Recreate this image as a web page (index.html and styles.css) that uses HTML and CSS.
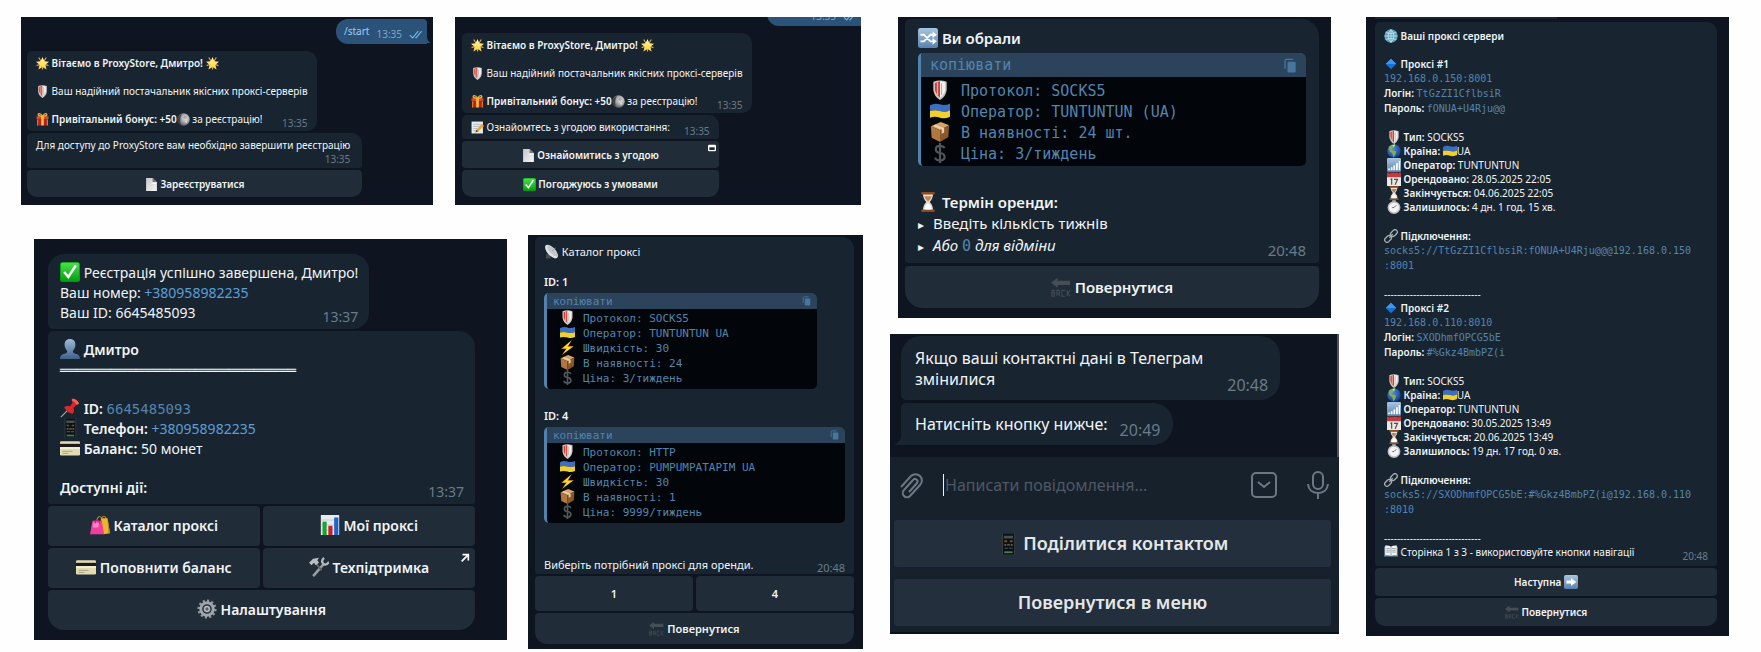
FILE: index.html
```html
<!DOCTYPE html>
<html lang="uk">
<head>
<meta charset="utf-8">
<meta name="viewport" content="width=device-width, initial-scale=1">
<title>ProxyStore</title>
<link rel="stylesheet" href="styles.css">
</head>
<body>
<svg class="sprite" aria-hidden="true">
  <defs>
    <linearGradient id="g-gold" x1="0" y1="0" x2="0" y2="1"><stop offset="0" stop-color="#fff9b8"/><stop offset="1" stop-color="#ffce30"/></linearGradient>
    <linearGradient id="g-green" x1="0" y1="0" x2="0" y2="1"><stop offset="0" stop-color="#4be04a"/><stop offset="1" stop-color="#00a010"/></linearGradient>
    <linearGradient id="g-blue" x1="0" y1="0" x2="0" y2="1"><stop offset="0" stop-color="#a9c6e2"/><stop offset="1" stop-color="#5881ac"/></linearGradient>
    <linearGradient id="g-page" x1="0" y1="0" x2="1" y2="1"><stop offset="0" stop-color="#c4c6c8"/><stop offset="1" stop-color="#f6f6f6"/></linearGradient>
    <linearGradient id="g-bust" x1="0" y1="0" x2="0" y2="1"><stop offset="0" stop-color="#9dbbd8"/><stop offset="1" stop-color="#3d618a"/></linearGradient>
    <radialGradient id="g-moon" cx=".65" cy=".4" r=".7"><stop offset="0" stop-color="#e8e8e8"/><stop offset=".5" stop-color="#a4a4a6"/><stop offset="1" stop-color="#4a4b50"/></radialGradient>
    <radialGradient id="g-earth" cx=".4" cy=".35" r=".7"><stop offset="0" stop-color="#4f8fe8"/><stop offset="1" stop-color="#123a8c"/></radialGradient>
  </defs>
  <symbol id="star" viewBox="0 0 24 24"><path stroke="#e0a63a" stroke-width="2.200" d="M12 12L5 1M12 12l7-11M12 12L1 16M12 12l11 4M12 12v11"/><path fill="url(#g-gold)" d="M12 0l3.500 8 8.500.8-6.500 5.500L19.500 23 12 18.500 4.500 23l2-8.700L0 8.800 8.500 8z"/></symbol>
  <symbol id="shield" viewBox="0 0 24 24"><path fill="#c9c7c5" d="M4 2q8-3 16 0v10q-1 8-8 12Q5 20 4 12z"/><path fill="#d8392f" d="M6 3.500q6-2 6-2V21q-5-4-6-9z"/><path fill="#f4f2f0" d="M12 1.500q6 1 6 2V12q-1 6-6 9z"/><path stroke="#e9bdb6" stroke-width="1.500" d="M9 3v15"/><path stroke="#9f9690" d="M14 4v14"/></symbol>
  <symbol id="gift" viewBox="0 0 24 24"><path fill="#b3231c" d="M2 10h20v13H2z"/><path fill="#dc4a2a" d="M1 6h22v5H1z"/><path fill="#f4b942" d="M9.500 5h5v18h-5z"/><path fill="none" stroke="#f0ad35" stroke-width="2.500" d="M12 6C7-2 2 2 5 5q2 1 7 1 5 0 7-1c3-3-2-7-7 1"/><path fill="#e68122" d="M2 12h2v11H2zM20 12h2v11h-2z"/></symbol>
  <symbol id="moon" viewBox="0 0 24 24"><circle cx="12" cy="12" r="11.500" fill="url(#g-moon)"/><path fill="#2b2d33" opacity=".7" d="M9 2Q1 5 1 13q1 6 6 9-3-10 2-20"/><circle cx="15" cy="8" r="3" fill="#8d8e91" opacity=".6"/><circle cx="17" cy="16" r="2" fill="#f3f3f3" opacity=".6"/></symbol>
  <symbol id="page" viewBox="0 0 24 24"><path fill="url(#g-page)" d="M2 0h12l8 8v16H2z"/><path fill="#77797c" d="M14 0l8 8h-8z"/><path fill="#f5f5f5" d="M14 8h8l-1.500 3H12z"/></symbol>
  <symbol id="memo" viewBox="0 0 24 24"><path fill="#ebebeb" d="M1 1h21v22H1z"/><path stroke="#a9b3bd" stroke-width="1.500" d="M4 6h14M4 10h12M4 14h8M4 18h6"/><path fill="#f0a92c" d="M10 16L20 5l4 4-10 10z"/><path fill="#5d4021" d="M10 16l4 3-6 2z"/></symbol>
  <symbol id="check" viewBox="0 0 24 24"><rect width="24" height="24" rx="3" fill="#0a9416"/><rect x="1" y="1" width="22" height="22" rx="2" fill="url(#g-green)"/><path fill="none" stroke="#fff" stroke-width="3" d="M5 12l5 6L19 4"/></symbol>
  <symbol id="bust" viewBox="0 0 24 24"><path fill="url(#g-bust)" d="M12 0c4 0 6.500 2.500 6.500 7 0 3-1.500 6-3 7 0 3 1 3 4 4 3 1 4 2 4.500 6H0c.5-4 1.500-5 4.500-6 3-1 4-1 4-4-1.500-1-3-4-3-7C5.500 2.500 8 0 12 0z"/></symbol>
  <symbol id="pin" viewBox="0 0 24 24"><path stroke="#9aa3ab" stroke-width="1.500" d="M1 23L10 14"/><path fill="#d9272c" d="M14 1q6-1 9 6l-4 2-3 3q2 4-1 7-7-2-10-8 3-3 7-1l3-4z"/><path fill="#f2625d" d="M15 1q5 0 8 6l-3 1q-2-4-6-5z"/></symbol>
  <symbol id="phone" viewBox="0 0 24 24"><rect x="6" y="0" width="13" height="24" rx="1" fill="#0d1013" stroke="#3b4042"/><path fill="#3f5350" d="M7.500 3h10v3h-10z"/><path fill="#6c4e3c" d="M8 8h3v2H8zM14 8h3v2h-3zM11 12h3v2h-3z"/><path fill="#5b6266" d="M8 12h2v2H8zM15 12h2v2h-2zM8 16h4v1H8zM13 16h4v1h-4z"/><path fill="#3e8159" d="M8 20h9v2H8z"/></symbol>
  <symbol id="card" viewBox="0 0 24 24"><rect y="4" width="24" height="17" rx="1.500" fill="#e3dcb2"/><path fill="#1d1c1a" d="M0 7h24v4H0z"/><path fill="#f7f4df" d="M0 11h24v2H0z"/><path stroke="#9c977a" d="M3 16h12M3 18.500h7"/></symbol>
  <symbol id="bags" viewBox="0 0 24 24"><path fill="none" stroke="#a98429" stroke-width="1.300" d="M13 5q4-7 7 0M8 6q3-8 7-1"/><path fill="#eeb52a" d="M13 4h8l3 18-8 1z"/><path fill="#c48a18" d="M21 4l3 18-2 .5z"/><path fill="#f13f9f" d="M3 7h11l3 16H0z"/><path fill="#ff83c6" d="M4 9h7l-1 6H3z"/><path fill="none" stroke="#bb2678" stroke-width="1.300" d="M6 10q2-9 6 0"/></symbol>
  <symbol id="chart" viewBox="0 0 24 24"><path fill="#e6ebf0" d="M1 0h22v24H1z"/><path stroke="#bcc5cf" d="M1 6h22M1 12h22M1 18h22"/><path fill="#18a52d" d="M3 8h5v16H3z"/><path fill="#c9202a" d="M10 13h5v11h-5z"/><path fill="#1c65c4" d="M17 3h5v21h-5z"/></symbol>
  <symbol id="tools" viewBox="0 0 24 24"><path stroke="#9a9fa4" stroke-width="3" d="M5 23L18 8"/><path fill="none" stroke="#b4babe" stroke-width="2.800" d="M18 1q-4 4-1 7t7-2"/><path stroke="#6d6259" stroke-width="2.200" d="M15 16L8 7"/><path fill="#b8bec2" d="M0 7l5-5 7-1-2 3 2 3-4 3-2-3-3 3z"/></symbol>
  <symbol id="gear" viewBox="0 0 24 24"><circle cx="12" cy="12" r="10" fill="none" stroke="#8f979d" stroke-width="3" stroke-dasharray="2.600 2.600"/><circle cx="12" cy="12" r="7.500" fill="none" stroke="#9fa7ad" stroke-width="3.500"/><circle cx="12" cy="12" r="4.500" fill="#545d65"/><circle cx="12" cy="12" r="2.800" fill="none" stroke="#c2c8cc" stroke-width="1.500"/></symbol>
  <symbol id="dish" viewBox="0 0 24 24"><path fill="#474d53" d="M4 15l-1 8h8l-1-5z"/><ellipse cx="12" cy="12" rx="6.500" ry="13.500" transform="rotate(-42 12 12)" fill="#e2e5e7"/><ellipse cx="13" cy="11" rx="4" ry="11" transform="rotate(-42 13 11)" fill="#c2c7cb"/><path stroke="#8d949a" stroke-width="1.300" d="M13 11l6-5"/></symbol>
  <symbol id="flag" viewBox="0 0 24 24"><path fill="#3c6fc4" d="M0 5q6-3 12-1t12-1v8q-6 3-12 1T0 12z"/><path fill="#f0d02c" d="M0 12q6-2 12 0t12-1v8q-6 3-12 1T0 20z"/></symbol>
  <symbol id="bolt" viewBox="0 0 24 24"><path fill="#f6a81a" d="M19 0L2 14h8L3 24 22 10h-9z"/><path fill="#ffdf3a" d="M17 2L5 13h7l-6 8 13-10h-8z"/></symbol>
  <symbol id="box" viewBox="0 0 24 24"><path fill="#d7a36c" d="M1 5l12-5 10 4-11 6z"/><path fill="#b07840" d="M1 5l11 5v14L2 19z"/><path fill="#8a5829" d="M12 10l11-6-1 14-10 6z"/><path fill="#ead0a4" d="M6 3l11 4.500v5l-3 1.500V9L4 5z"/></symbol>
  <symbol id="dollar" viewBox="0 0 24 24"><path fill="none" stroke="#50565a" stroke-width="2.600" d="M17.500 6q-1.500-2.500-5.500-2.500-5 0-5 4t5 4.500 5.500 4.500q0 4.500-5.500 4.500-4.500 0-6-3.500M12 0v24"/></symbol>
  <symbol id="back" viewBox="0 0 24 24"><path fill="#454d55" d="M0 7l8-6v3.500h15v5H8V13z"/><path fill="none" stroke="#424a52" stroke-width="1.300" d="M1 23v-7h3v3H1h3v4zM7 23v-7h3v7M7 20h3M17 16h-4v7h4M19.500 16v7M23 16l-3 3.500 3 3.500"/></symbol>
  <symbol id="shuffle" viewBox="0 0 24 24"><rect width="24" height="24" rx="3" fill="url(#g-blue)"/><path fill="none" stroke="#fff" stroke-width="2.300" d="M3 8h4l8 8h4M3 16h4l8-8h4"/><path fill="#fff" d="M17.500 4l5 4-5 4zM17.500 12l5 4-5 4z"/></symbol>
  <symbol id="next" viewBox="0 0 24 24"><rect width="24" height="24" rx="3" fill="url(#g-blue)"/><path fill="#fff" d="M4 9.500h8V5l9 7-9 7v-4.500H4z"/></symbol>
  <symbol id="hourglass" viewBox="0 0 24 24"><path fill="#e9e2dc" d="M6 2h12q0 6-4 10 4 4 4 10H6q0-6 4-10-4-4-4-10z"/><path fill="#8b4a22" d="M4 0h16v3H4zM4 21h16v3H4z"/><path fill="#c08355" d="M7.500 5h9q-1 4-4.500 6.500Q8.500 9 7.500 5z"/><path fill="#fff" d="M8 21q0-5 4-7 4 2 4 7z"/></symbol>
  <symbol id="globe" viewBox="0 0 24 24"><circle cx="12" cy="12" r="11.500" fill="#5ba3bd"/><path fill="none" stroke="#cfe8ef" stroke-width="1.300" d="M12 1v22M1 12h22M3 6q9 4 18 0M3 18q9-4 18 0M12 1Q2 12 12 23M12 1q10 11 0 22"/></symbol>
  <symbol id="diamond" viewBox="0 0 24 24"><path fill="#1672d8" d="M12 3l9 9-9 9-9-9z"/><path fill="#3b98f2" d="M12 3l9 9H3z"/></symbol>
  <symbol id="earth" viewBox="0 0 24 24"><circle cx="12" cy="12" r="11.500" fill="url(#g-earth)"/><path fill="#87ad48" d="M4 4q5-4 10-3l-2 5-4 3 2 2 6 2-2 6-3 4-2-7-4-3q-3-4-1-9z"/><path fill="#d8e5c0" d="M9 2l5-1-2 4z"/></symbol>
  <symbol id="signal" viewBox="0 0 24 24"><rect width="24" height="24" rx="2" fill="url(#g-blue)"/><path fill="#fff" d="M2 18h3v3H2zM6.500 16h3v5h-3zM11 13h3v8h-3zM15.500 9h3v12h-3zM20 5h2.500v16H20z"/></symbol>
  <symbol id="calendar" viewBox="0 0 24 24"><path fill="#ece9e3" d="M0 2h24v22H0z"/><path fill="#bd3f45" d="M0 1h24v8H0z"/><path fill="#6c2429" d="M4 0h2v3H4zM18 0h2v3h-2z"/><path fill="none" stroke="#4b4d4d" stroke-width="2" d="M6 13l2-1v10M12 12.500h6L14 22"/></symbol>
  <symbol id="stopwatch" viewBox="0 0 24 24"><path fill="#8f969b" d="M9 0h6v4H9z"/><circle cx="12" cy="13" r="11" fill="#b9bcbf"/><circle cx="12" cy="13" r="8.500" fill="#f4f4f2"/><path fill="none" stroke="#444" stroke-width="1.300" d="M12 13l4-4M12 13H9"/></symbol>
  <symbol id="link" viewBox="0 0 24 24"><g fill="none" stroke="#a9b0b5" stroke-width="2.200"><rect x="10.500" y="3" width="13" height="8" rx="4" transform="rotate(-45 17 7)"/><rect x=".5" y="13" width="13" height="8" rx="4" transform="rotate(-45 7 17)"/><path d="M9 15l6-6"/></g></symbol>
  <symbol id="book" viewBox="0 0 24 24"><path fill="#587186" d="M0 3h24v17H0z"/><path fill="#f1f1ef" d="M2 1q6-1 10 2 4-3 10-2v17q-6-1-10 1-4-2-10-1z"/><path stroke="#87929b" stroke-width="1.300" d="M12 3v16M4 6h6M4 9h6M4 12h6M14 6h6M14 9h6M14 12h6"/></symbol>
  <symbol id="ticks" viewBox="0 0 24 16"><path fill="none" stroke="#6fb7ee" stroke-width="2" d="M1 9l5 5L16 2M11 13l1 1L22 2"/></symbol>
  <symbol id="copy" viewBox="0 0 24 24"><path fill="none" stroke="#46789f" stroke-width="2" d="M4 17V5q0-3 3-3h10"/><rect x="8" y="6" width="13" height="17" rx="2" fill="#46789f"/></symbol>
  <symbol id="tail" viewBox="0 0 8 12"><path fill="currentColor" d="M8 0v12H0q7-3 8-12z"/></symbol>
</svg>

<main class="board">
  <div class="left">
    <div class="row upper">
      <section class="chat s10 welcome">
        <div class="out"><span>/start</span><time>13:35</time><svg class="ticks"><use href="#ticks"/></svg><svg class="tail"><use href="#tail"/></svg></div>
        <div class="msg">
          <p><svg class="e"><use href="#star"/></svg> <b>Вітаємо в ProxyStore, Дмитро!</b> <svg class="e"><use href="#star"/></svg></p>
          <p class="para"><svg class="e"><use href="#shield"/></svg> Ваш надійний постачальник якісних проксі-серверів</p>
          <p class="para end"><span><svg class="e"><use href="#gift"/></svg> <b>Привітальний бонус: +50</b><svg class="e"><use href="#moon"/></svg> за реєстрацію!</span><time>13:35</time></p>
        </div>
        <div class="stack">
          <div class="msg roomy"><p>Для доступу до ProxyStore вам необхідно завершити реєстрацію</p><time>13:35</time></div>
          <button class="last" type="button"><svg class="e"><use href="#page"/></svg> Зареєструватися</button>
        </div>
      </section>

      <section class="chat s10 terms">
        <div class="out cut"><time>13:35</time><svg class="ticks"><use href="#ticks"/></svg></div>
        <div class="msg">
          <p><svg class="e"><use href="#star"/></svg> <b>Вітаємо в ProxyStore, Дмитро!</b> <svg class="e"><use href="#star"/></svg></p>
          <p class="para"><svg class="e"><use href="#shield"/></svg> Ваш надійний постачальник якісних проксі-серверів</p>
          <p class="para end"><span><svg class="e"><use href="#gift"/></svg> <b>Привітальний бонус: +50</b><svg class="e"><use href="#moon"/></svg> за реєстрацію!</span><time>13:35</time></p>
        </div>
        <div class="stack">
          <div class="msg"><p class="end"><span><svg class="e"><use href="#memo"/></svg> Ознайомтесь з угодою використання:</span><time>13:35</time></p></div>
          <button type="button"><svg class="e"><use href="#page"/></svg> Ознайомитись з угодою<svg class="corner" viewBox="0 0 12 12"><path fill="#fff" fill-rule="evenodd" d="M2 1h8q2 0 2 2v6q0 2-2 2H2q-2 0-2-2V3q0-2 2-2zm0 4v4h8V5z"/></svg></button>
          <button class="last" type="button"><svg class="e"><use href="#check"/></svg> Погоджуюсь з умовами</button>
        </div>
      </section>
    </div>

    <div class="row lower">
      <section class="chat s14 profile">
        <div class="msg">
          <p><svg class="e"><use href="#check"/></svg> Реєстрація успішно завершена, Дмитро!</p>
          <p>Ваш номер: <a href="tel:+380958982235">+380958982235</a></p>
          <p class="end"><span>Ваш ID: 6645485093</span><time>13:37</time></p>
        </div>
        <div class="stack wide">
          <div class="msg">
            <p><svg class="e"><use href="#bust"/></svg> <b>Дмитро</b></p>
            <p class="rule">════════════════════════════</p>
            <p class="para"><svg class="e"><use href="#pin"/></svg> <b>ID:</b> <code>6645485093</code></p>
            <p><svg class="e"><use href="#phone"/></svg> <b>Телефон:</b> <a href="tel:+380958982235">+380958982235</a></p>
            <p><svg class="e"><use href="#card"/></svg> <b>Баланс:</b> 50 монет</p>
            <p class="para end"><b>Доступні дії:</b><time>13:37</time></p>
          </div>
          <div class="pair">
            <button type="button"><svg class="e"><use href="#bags"/></svg> Каталог проксі</button>
            <button type="button"><svg class="e"><use href="#chart"/></svg> Мої проксі</button>
          </div>
          <div class="pair">
            <button type="button"><svg class="e"><use href="#card"/></svg> Поповнити баланс</button>
            <button type="button"><svg class="e"><use href="#tools"/></svg> Техпідтримка<svg class="corner" viewBox="0 0 12 12"><path fill="none" stroke="#fff" stroke-width="2" d="M3 2h7v7M10 2L2 10"/></svg></button>
          </div>
          <button class="last" type="button"><svg class="e"><use href="#gear"/></svg> Налаштування</button>
        </div>
      </section>

      <section class="chat s11 catalog">
        <div class="stack wide">
          <div class="msg">
            <p><svg class="e"><use href="#dish"/></svg> Каталог проксі</p>
            <p class="para"><b>ID: 1</b></p>
            <div class="block">
              <button class="copy" type="button">копіювати<svg><use href="#copy"/></svg></button>
              <p><svg class="e"><use href="#shield"/></svg>Протокол: SOCKS5</p>
              <p><svg class="e"><use href="#flag"/></svg>Оператор: TUNTUNTUN UA</p>
              <p><svg class="e"><use href="#bolt"/></svg>Швидкість: 30</p>
              <p><svg class="e"><use href="#box"/></svg>В наявності: 24</p>
              <p><svg class="e"><use href="#dollar"/></svg>Ціна: 3/тиждень</p>
            </div>
            <p class="para"><b>ID: 4</b></p>
            <div class="block full">
              <button class="copy" type="button">копіювати<svg><use href="#copy"/></svg></button>
              <p><svg class="e"><use href="#shield"/></svg>Протокол: HTTP</p>
              <p><svg class="e"><use href="#flag"/></svg>Оператор: PUMPUMPATAPIM UA</p>
              <p><svg class="e"><use href="#bolt"/></svg>Швидкість: 30</p>
              <p><svg class="e"><use href="#box"/></svg>В наявності: 1</p>
              <p><svg class="e"><use href="#dollar"/></svg>Ціна: 9999/тиждень</p>
            </div>
            <p class="para far end"><span>Виберіть потрібний проксі для оренди.</span><time>20:48</time></p>
          </div>
          <div class="pair"><button type="button">1</button><button type="button">4</button></div>
          <button class="last" type="button"><svg class="e"><use href="#back"/></svg> Повернутися</button>
        </div>
      </section>
    </div>
  </div>

  <div class="middle">
    <section class="chat s15 order">
      <div class="stack wide">
        <div class="msg">
          <p><svg class="e"><use href="#shuffle"/></svg> <b>Ви обрали</b></p>
          <div class="block full">
            <button class="copy" type="button">копіювати<svg><use href="#copy"/></svg></button>
            <p><svg class="e"><use href="#shield"/></svg>Протокол: SOCKS5</p>
            <p><svg class="e"><use href="#flag"/></svg>Оператор: TUNTUNTUN (UA)</p>
            <p><svg class="e"><use href="#box"/></svg>В наявності: 24 шт.</p>
            <p><svg class="e"><use href="#dollar"/></svg>Ціна: 3/тиждень</p>
          </div>
          <p class="para"><svg class="e"><use href="#hourglass"/></svg> <b>Термін оренди:</b></p>
          <p><span class="tri">▸</span>Введіть кількість тижнів</p>
          <p class="end"><span><span class="tri">▸</span><i>Або <code>0</code> для відміни</i></span><time>20:48</time></p>
        </div>
        <button class="last" type="button"><svg class="e"><use href="#back"/></svg> Повернутися</button>
      </div>
    </section>

    <section class="chat s16 contact">
      <div class="feed">
        <div class="msg"><p class="end"><span>Якщо ваші контактні дані в Телеграм<br>змінилися</span><time>20:48</time></p></div>
        <div class="msg"><p class="end"><span>Натисніть кнопку нижче:</span><time>20:49</time></p><svg class="tail"><use href="#tail"/></svg></div>
      </div>
      <form class="composer">
        <button type="button" aria-label="Прикріпити"><svg viewBox="0 0 26 28"><path d="M3 16L13 5a6 6 0 0 1 9 9L12 25a4 4 0 0 1-6-6l9-10a2.500 2.500 0 0 1 4 3l-8 9"/></svg></button>
        <span class="field"><input type="text" aria-label="Повідомлення" placeholder="Написати повідомлення..."></span>
        <button type="button" aria-label="Клавіатура"><svg viewBox="0 0 26 28"><rect x="1" y="2" width="24" height="24" rx="4"/><path d="M7 11l6 5 6-5"/></svg></button>
        <button type="button" aria-label="Голосове повідомлення"><svg viewBox="0 0 26 28"><rect x="8" y="1" width="10" height="17" rx="5"/><path d="M3 13q1 9 10 9t10-9M13 22v6"/></svg></button>
      </form>
      <div class="keys">
        <button type="button"><svg class="e"><use href="#phone"/></svg> Поділитися контактом</button>
        <button type="button">Повернутися в меню</button>
      </div>
    </section>
  </div>

  <section class="chat s10 servers">
    <div class="previous"></div>
    <div class="stack wide">
      <div class="msg">
        <p><svg class="e"><use href="#globe"/></svg> <b>Ваші проксі сервери</b></p>
        <p class="para"><svg class="e"><use href="#diamond"/></svg> <b>Проксі #1</b></p>
        <p><code>192.168.0.150:8001</code></p>
        <p><b>Логін:</b> <code>TtGzZI1CflbsiR</code></p>
        <p><b>Пароль:</b> <code>fONUA+U4Rju@@</code></p>
        <div class="para facts">
          <p><svg class="e"><use href="#shield"/></svg> <b>Тип:</b> SOCKS5</p>
          <p><svg class="e"><use href="#earth"/></svg> <b>Країна:</b> <svg class="e"><use href="#flag"/></svg>UA</p>
          <p><svg class="e"><use href="#signal"/></svg> <b>Оператор:</b> TUNTUNTUN</p>
          <p><svg class="e"><use href="#calendar"/></svg> <b>Орендовано:</b> 28.05.2025 22:05</p>
          <p><svg class="e"><use href="#hourglass"/></svg> <b>Закінчується:</b> 04.06.2025 22:05</p>
          <p><svg class="e"><use href="#stopwatch"/></svg> <b>Залишилось:</b> 4 дн. 1 год. 15 хв.</p>
        </div>
        <p class="para"><svg class="e"><use href="#link"/></svg> <b>Підключення:</b></p>
        <p><code>socks5://TtGzZI1CflbsiR:fONUA+U4Rju@@@192.168.0.150<br>:8001</code></p>
        <p class="para">------------------------------</p>
        <p><svg class="e"><use href="#diamond"/></svg> <b>Проксі #2</b></p>
        <p><code>192.168.0.110:8010</code></p>
        <p><b>Логін:</b> <code>SXODhmfOPCG5bE</code></p>
        <p><b>Пароль:</b> <code>#%Gkz4BmbPZ(i</code></p>
        <div class="para facts">
          <p><svg class="e"><use href="#shield"/></svg> <b>Тип:</b> SOCKS5</p>
          <p><svg class="e"><use href="#earth"/></svg> <b>Країна:</b> <svg class="e"><use href="#flag"/></svg>UA</p>
          <p><svg class="e"><use href="#signal"/></svg> <b>Оператор:</b> TUNTUNTUN</p>
          <p><svg class="e"><use href="#calendar"/></svg> <b>Орендовано:</b> 30.05.2025 13:49</p>
          <p><svg class="e"><use href="#hourglass"/></svg> <b>Закінчується:</b> 20.06.2025 13:49</p>
          <p><svg class="e"><use href="#stopwatch"/></svg> <b>Залишилось:</b> 19 дн. 17 год. 0 хв.</p>
        </div>
        <p class="para"><svg class="e"><use href="#link"/></svg> <b>Підключення:</b></p>
        <p><code>socks5://SXODhmfOPCG5bE:#%Gkz4BmbPZ(i@192.168.0.110<br>:8010</code></p>
        <p class="para">------------------------------</p>
        <p class="end"><span><svg class="e"><use href="#book"/></svg> Сторінка 1 з 3 - використовуйте кнопки навігації</span><time>20:48</time></p>
      </div>
      <button type="button">Наступна <svg class="e"><use href="#next"/></svg></button>
      <button class="last" type="button"><svg class="e"><use href="#back"/></svg> Повернутися</button>
    </div>
  </section>
</main>
</body>
</html>
```

FILE: styles.css
```css
* { box-sizing: border-box; }

body {
  margin: 0;
  background: #fefefe;
  font-family: "Noto Sans", "DejaVu Sans", sans-serif;
}

p { margin: 0; white-space: nowrap; }
b { font-weight: 600; }
a { color: #6ab3f3; text-decoration: none; opacity: .85; }
code { font-family: "DejaVu Sans Mono", monospace; font-size: var(--fs); color: #5484ae; font-style: normal; }
time { color: #6b7a88; font-weight: 400; white-space: nowrap; }
button, input { font: inherit; color: inherit; border: 0; padding: 0; background: none; }

.sprite { position: absolute; width: 0; height: 0; }

.board {
  display: grid;
  grid-template-columns: minmax(0, 842fr) minmax(0, 449fr) minmax(0, 363fr);
  align-items: start;
  gap: 27px;
  padding: 17px 32px 0 21px;
}
.left { display: grid; gap: 30px; }
.middle { display: grid; gap: 16px; }
.row { display: grid; align-items: start; }
.row.upper { grid-template-columns: minmax(0, 412fr) minmax(0, 406fr); gap: 22px; padding-right: 2px; }
.row.lower { grid-template-columns: minmax(0, 473fr) minmax(0, 335fr); gap: 21px; padding-left: 13px; }

/* Chat window */
.chat {
  --fs: 10px; --lh: 14px; --blank: 14px; --emo: 13px; --drop: -3px;
  --r: 10px; --px: 9px; --gap: 2px; --btn: 27px;
  min-width: 0;
  overflow: hidden;
  background: #0e1520;
  color: #f1f4f6;
  font-size: var(--fs);
  line-height: var(--lh);
  display: flex;
  flex-direction: column;
  align-items: flex-start;
  gap: var(--gap);
}
.s11 { --fs: 11px; --lh: 15px; --blank: 15px; --emo: 15px; --r: 12px; --btn: 31px; }
.s14 { --fs: 14px; --lh: 20px; --blank: 19px; --emo: 20px; --drop: -4px; --r: 16px; --px: 12px; --gap: 2px; --btn: 40px; }
.s15 { --fs: 15px; --lh: 21px; --blank: 26px; --emo: 20px; --drop: -4px; --r: 18px; --px: 13px; --gap: 3px; --btn: 42px; }
.s16 { --fs: 16px; --lh: 21px; --blank: 22px; --emo: 22px; --drop: -5px; --r: 20px; --px: 14px; --gap: 3px; --btn: 47px; }

.e { width: var(--emo); height: var(--emo); vertical-align: var(--drop); margin-top: -6px; }

.msg {
  position: relative;
  background: #182531;
  padding: 6px var(--px) 3px;
  border-radius: 5px var(--r) var(--r) 5px;
}
.msg:first-child { border-top-left-radius: var(--r); }
.para { padding-top: var(--blank); }
.para.far { padding-top: calc(var(--blank) * 2); }
.stack .msg { border-radius: 5px var(--r) 3px 3px; }
.end { display: flex; justify-content: space-between; align-items: flex-end; gap: 14px; }
.end > span, .end > b { margin-bottom: 4px; }
.roomy time { display: block; text-align: right; }

.stack { display: flex; flex-direction: column; gap: var(--gap); }
.stack.wide { align-self: stretch; }
.pair { display: grid; grid-template-columns: 1fr 1fr; gap: 3px; }
.stack > button, .pair > button {
  position: relative;
  min-height: var(--btn);
  background: #202c38;
  border-radius: 4px;
  font-weight: 600;
}
.stack > .last { border-radius: 4px 4px var(--r) var(--r); }
.corner { position: absolute; top: 3px; right: 3px; width: 8px; height: 8px; }

.out {
  position: relative;
  align-self: flex-end;
  display: flex;
  gap: 7px;
  padding: 5px 4px 3px 8px;
  background: #2b5278;
  border-radius: 12px 4px 0 12px;
  color: #a3cbee;
}
.out time { color: #7ea5cb; margin-top: 3px; }
.ticks { width: 14px; height: 9px; margin-top: 6px; }
.out .tail { position: absolute; right: -4px; bottom: 0; width: 4px; height: 8px; color: #2b5278; transform: scaleX(-1); }

/* Code block */
.block {
  width: fit-content;
  background: #02060a;
  border-left: 3px solid #5083ad;
  border-radius: 5px;
  overflow: hidden;
  font-family: "DejaVu Sans Mono", monospace;
  color: #5484ae;
}
.block.full { width: auto; }
.copy {
  width: 100%;
  display: flex;
  justify-content: space-between;
  align-items: center;
  background: #2c445b;
  color: #5283ad;
}
.copy svg { width: var(--emo); height: 10px; }

/* Registration */
.welcome { padding: 2px 6px 8px; }
.welcome .out { margin-bottom: 5px; }
.terms { padding: 0 0 8px 7px; }
.terms .out { margin-top: -16px; margin-bottom: 5px; border-radius: 12px 0 0 12px; padding-left: 43px; padding-right: 4px; }
.welcome .msg, .terms .msg { padding-top: 5px; padding-bottom: 1px; }
.welcome .roomy { padding-right: 12px; padding-bottom: 2px; }

/* Profile */
.profile { margin-top: 4px; padding: 15px 32px 10px 14px; }
.profile .corner { top: 5px; right: 5px; width: 10px; height: 10px; }
.profile .msg { padding-top: 9px; padding-right: 11px; padding-bottom: 2px; }
.rule { font-family: "DejaVu Sans Mono", monospace; }

/* Catalog */
.catalog { padding: 2px 9px 5px 7px; }
.catalog .msg { padding-top: 7px; padding-bottom: 0; }
.catalog .block { margin: 4px 0 4px; min-width: 273px; }
.catalog .copy { height: 16px; padding: 0 3px 0 6px; margin-bottom: 2px; }
.catalog .block p { padding-left: 13px; }
.catalog .block .e { margin-right: 8px; }
.catalog .block > :last-child { padding-bottom: 3px; }
.catalog .pair > button { min-height: 35px; }
.catalog .end time { line-height: 12px; }
.catalog .end > span { margin-bottom: 2px; }

/* Order */
.order { margin: 0 8px; padding: 2px 12px 10px 7px; }
.order .msg { padding-top: 9px; padding-bottom: 2px; }
.order .block { margin: 4px 0 0; }
.order .copy { height: 24px; padding: 0 6px 0 9px; margin-bottom: 4px; }
.order .copy svg { height: 15px; }
.order .block p { padding-left: 9px; }
.order .block .e { margin-right: 11px; }
.order .block > :last-child { padding-bottom: 1px; }
.tri { display: inline-block; width: 15px; font-size: 12px; }

/* Contact */
.contact { gap: 0; border-bottom: 2px solid #0a1119; background: #17212b; align-items: stretch; }
.feed {
  display: flex;
  flex-direction: column;
  align-items: flex-start;
  gap: 3px;
  padding: 2px 11px 12px;
  background: #0e1520;
  border-right: 2px solid #4c535b;
}
.feed .msg { padding: 12px 12px 4px 14px; border-radius: var(--r) var(--r) var(--r) 5px; }
.feed .end { gap: 12px; }
.feed .msg:first-child .end { gap: 24px; }
.feed .msg + .msg { border-top-left-radius: 5px; border-bottom-left-radius: 0; padding-top: 11px; }
.feed .end > span { margin-bottom: 6px; }
.feed .tail { position: absolute; left: -7px; bottom: 0; width: 8px; height: 12px; color: #182531; }
.composer { display: flex; align-items: center; gap: 19px; padding: 14px 8px 21px; }
.composer svg { display: block; width: 26px; height: 28px; fill: none; stroke: #6b7883; stroke-width: 2; }
.composer button:last-child { margin-left: 9px; }
.field { flex: 1; border-left: 1px solid #f1f4f6; }
.field input { display: block; width: 100%; padding-left: 1px; height: 22px; outline: 0; }
.field input::placeholder { color: #4c5864; opacity: 1; }
.keys { display: grid; gap: 12px; padding: 0 8px 6px 4px; }
.keys button { min-height: var(--btn); background: #232f3c; border-radius: 3px; font-size: 18px; font-weight: 600; color: #e3e7ea; }

/* Servers */
.servers { --emo: 14px; --btn: 28px; padding: 0 12px 10px 9px; gap: 3px; }
.previous { width: 182px; height: 2px; background: #182531; }
.servers .msg { padding: 7px 9px 3px; }
.facts { margin-bottom: 1px; }
.facts .e:first-child { margin-left: 3px; }
```
